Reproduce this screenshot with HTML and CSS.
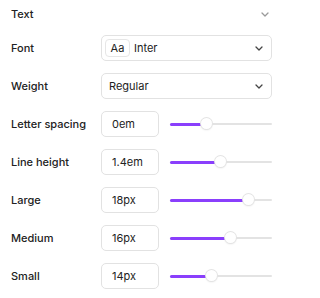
FILE: index.html
```html
<!DOCTYPE html>
<html>
<head>
<meta charset="utf-8">
<link rel="stylesheet" href="styles.css">
</head>
<body>
<div class="panel">
  <div class="header">
    <span class="title">Text</span>
    <svg class="chev chev-head" width="8" height="5" viewBox="0 0 8 5"><path d="M1 1l3 3 3-3" fill="none" stroke="#9a9a9a" stroke-width="1.3" stroke-linecap="round" stroke-linejoin="round"/></svg>
  </div>
  <div class="rows">
    <div class="row">
      <span class="label">Font</span>
      <div class="select">
        <span class="aa">Aa</span>
        <span class="sel-text">Inter</span>
        <svg class="chev" width="8" height="5" viewBox="0 0 8 5"><path d="M1 1l3 3 3-3" fill="none" stroke="#444" stroke-width="1.3" stroke-linecap="round" stroke-linejoin="round"/></svg>
      </div>
    </div>
    <div class="row">
      <span class="label">Weight</span>
      <div class="select plain">
        <span class="sel-text">Regular</span>
        <svg class="chev" width="8" height="5" viewBox="0 0 8 5"><path d="M1 1l3 3 3-3" fill="none" stroke="#444" stroke-width="1.3" stroke-linecap="round" stroke-linejoin="round"/></svg>
      </div>
    </div>
    <div class="row">
      <span class="label">Letter spacing</span>
      <div class="input">0em</div>
      <div class="slider"><div class="fill" style="width:35.5%"></div><div class="thumb" style="left:35.5%"></div></div>
    </div>
    <div class="row">
      <span class="label">Line height</span>
      <div class="input">1.4em</div>
      <div class="slider"><div class="fill" style="width:49.5%"></div><div class="thumb" style="left:49.5%"></div></div>
    </div>
    <div class="row">
      <span class="label">Large</span>
      <div class="input">18px</div>
      <div class="slider"><div class="fill" style="width:77%"></div><div class="thumb" style="left:77%"></div></div>
    </div>
    <div class="row">
      <span class="label">Medium</span>
      <div class="input">16px</div>
      <div class="slider"><div class="fill" style="width:59%"></div><div class="thumb" style="left:59%"></div></div>
    </div>
    <div class="row">
      <span class="label">Small</span>
      <div class="input">14px</div>
      <div class="slider"><div class="fill" style="width:40.5%"></div><div class="thumb" style="left:40.5%"></div></div>
    </div>
  </div>
</div>
</body>
</html>
```
FILE: styles.css
```css
* { box-sizing: border-box; }
html, body { margin: 0; padding: 0; background: #fff; }
body {
  font-family: Inter, "Liberation Sans", sans-serif;
  font-size: 11px;
  color: #222;
}
.panel {
  width: 283px;
  padding: 0 11px 0 11px;
}
.header {
  height: 28px;
  display: flex;
  align-items: center;
  justify-content: space-between;
}
.title { font-weight: 500; }
.chev-head { margin-right: 3px; }
.rows {
  margin-top: 7px;
  display: flex;
  flex-direction: column;
  gap: 12px;
}
.row {
  display: flex;
  align-items: center;
  height: 26px;
}
.label {
  width: 90px;
  flex: none;
  font-weight: 500;
}
.select {
  flex: 1;
  height: 26px;
  border: 1px solid #e2e2e2;
  border-radius: 5px;
  display: flex;
  align-items: center;
  padding: 0 8px 0 3px;
}
.select.plain { padding-left: 7px; }
.aa {
  height: 18px;
  width: 25px;
  border: 1px solid #e6e6e6;
  border-radius: 4px;
  display: flex;
  align-items: center;
  justify-content: center;
  margin-right: 4px;
  font-size: 11px;
}
.sel-text { flex: 1; }
.chev { flex: none; }
.input {
  width: 58px;
  height: 26px;
  flex: none;
  border: 1px solid #e2e2e2;
  border-radius: 5px;
  display: flex;
  align-items: center;
  padding-left: 10px;
}
.slider {
  flex: 1;
  margin-left: 11px;
  height: 2px;
  background: #e3e3e3;
  border-radius: 1px;
  position: relative;
}
.fill {
  position: absolute;
  left: 0;
  top: -0.5px;
  height: 3px;
  background: #8a3ffc;
  border-radius: 2px;
}
.thumb {
  position: absolute;
  top: 1px;
  width: 11px;
  height: 11px;
  margin-left: -5.5px;
  margin-top: -6.5px;
  background: #fff;
  border-radius: 50%;
  box-shadow: 0 0 0 1px #e4e4e4, 0 1px 2px rgba(0,0,0,0.12);
}
```
